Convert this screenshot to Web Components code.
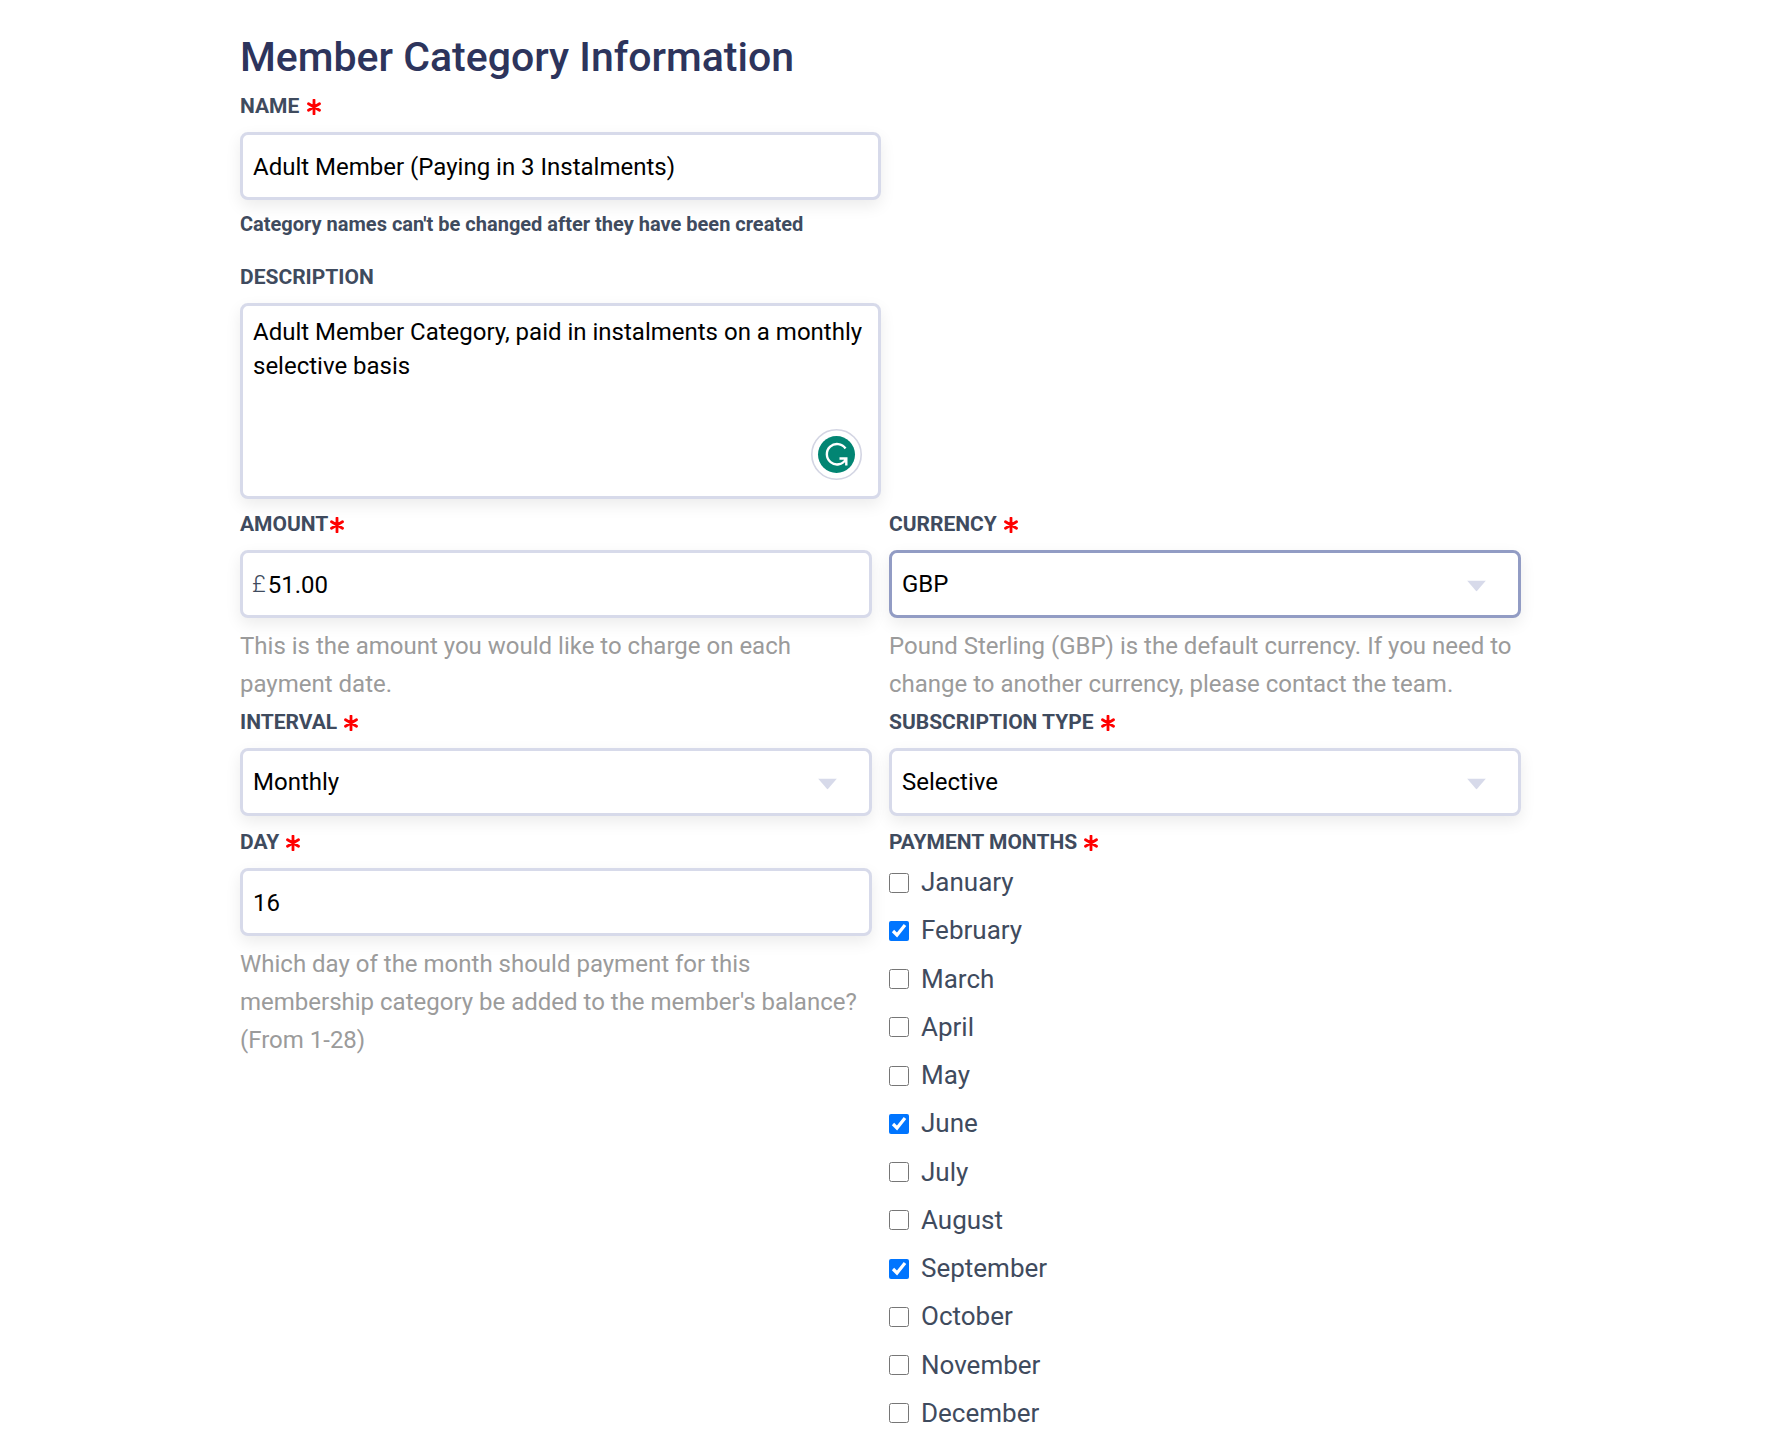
<!DOCTYPE html>
<html lang="en">
<head>
<meta charset="utf-8">
<meta name="viewport" content="width=device-width, initial-scale=1">
<title>Member Category Information</title>
<style>
  body {
    margin: 0;
    background: #fff;
    font-family: Roboto, "Liberation Sans", sans-serif;
    --ink: #3f4b5e;
    --heading: #2d345c;
    --line: #d7daea;
    --line-active: #929cc4;
    --muted: #9b9b9b;
    --required: #f00;
    --accent: #0075ff;
  }
</style>
</head>
<body>
<member-category-form></member-category-form>
<script>
const shared = `
  *, *::before, *::after { box-sizing: border-box; }
  :host { display: block; min-width: 0; color: var(--ink); }
  .label {
    display: block; margin: 0 0 7px; padding: 0;
    font-size: 21px; line-height: 38px; font-weight: 700; text-transform: uppercase;
  }
  .star { width: 14px; height: 16px; margin-left: 2px; vertical-align: -2px; }
  .box {
    position: relative; display: flex; align-items: stretch;
    border: 3px solid var(--line); border-radius: 8px; background: #fff;
    box-shadow: 0 6px 16px rgba(0, 0, 0, .08);
    margin-bottom: 7px;
  }
  :host([active]) .box { border-color: var(--line-active); }
  .box input, .box select, .box textarea {
    flex: 1; min-width: 0; width: 100%; margin: 0; padding: 0 10px; border: 0; outline: 0;
    background: none; border-radius: 5px; appearance: none;
    font-family: inherit; font-size: 24px; color: #000;
  }
  .box input, .box select { height: 62px; }
  .help { display: block; margin: 9px 0 0; font-size: 24px; line-height: 38px; color: var(--muted); }
`;
const star = `<svg class="star" viewBox="0 0 14 16" aria-hidden="true"><path d="M7 1v14M1.500 4.800l11 6.400M12.500 4.800l-11 6.400" stroke="var(--required)" stroke-width="2.800" stroke-linecap="round" fill="none"/></svg>`;

class BaseField extends HTMLElement {
  connectedCallback() {
    const root = this.attachShadow({ mode: 'open' });
    root.innerHTML = `<style>${shared}${this.styles()}</style>${this.markup()}`;
  }
  styles() { return ''; }
  get mark() {
    const r = this.getAttribute('required');
    return r === null ? '' : (r === 'tight' ? '' : ' ') + star;
  }
  get caption() { return `<label class="label" for="control">${this.getAttribute('label')}${this.mark}</label>`; }
  val(name) { return this.getAttribute(name) || ''; }
}

class TextField extends BaseField {
  styles() {
    return `.box input { padding-top: 1px; }
      .prefix { display: flex; align-items: center; padding-left: 9px; font-size: 24px; font-weight: 300; }
      .prefix + input { padding-left: 2px; }`;
  }
  markup() {
    const prefix = this.hasAttribute('prefix') ? `<span class="prefix">${this.val('prefix')}</span>` : '';
    return `${this.caption}<div class="box">${prefix}<input id="control" type="text" value="${this.val('value')}"></div><slot></slot>`;
  }
}
customElements.define('text-field', TextField);

class SelectField extends BaseField {
  styles() {
    return `.box select { padding-bottom: 1px; }
      .caret { position: absolute; right: 32px; top: 50%; margin-top: 2px; transform: translateY(-50%); width: 19px; height: 11px; pointer-events: none; }`;
  }
  markup() {
    return `${this.caption}<div class="box"><select id="control"><option>${this.val('value')}</option></select>
      <svg class="caret" viewBox="0 0 19 11" aria-hidden="true"><path d="M0 0h19L9.500 11z" fill="var(--line)"/></svg></div><slot></slot>`;
  }
}
customElements.define('select-field', SelectField);

class AreaField extends BaseField {
  styles() {
    return `.box { margin-bottom: 6px; }
      .box textarea { height: 190px; padding: 9px 10px; line-height: 34px; resize: none; }
      .assist { position: absolute; right: 16px; bottom: 16px; width: 51px; height: 51px; padding: 0; border: 0; background: none; }
      .assist svg { display: block; }`;
  }
  markup() {
    return `${this.caption}<div class="box"><textarea id="control">${this.val('value')}</textarea>
      <button class="assist" type="button" aria-label="Writing assistant"><svg width="51" height="51" viewBox="0 0 51 51">
        <circle cx="25.500" cy="25.500" r="24.700" fill="#fff" stroke="#d3d5e3" stroke-width="1.600"/>
        <circle cx="25.500" cy="25.500" r="18.500" fill="#028573"/>
        <path d="M34.500 19.500A10.200 10.200 0 1 0 34.800 30.500M28.500 29.500H35.300V36.500" fill="none" stroke="#fff" stroke-width="2.400"/>
      </svg></button></div><slot></slot>`;
  }
}
customElements.define('area-field', AreaField);

class HelpText extends HTMLElement {
  connectedCallback() {
    this.attachShadow({ mode: 'open' }).innerHTML = `<style>${shared}
      :host([strong]) .help { color: var(--ink); font-size: 20px; line-height: 34px; font-weight: 700; margin: 7px 0 17px; }
    </style><span class="help"><slot></slot></span>`;
  }
}
customElements.define('help-text', HelpText);

class MonthPicker extends BaseField {
  styles() {
    return `fieldset { margin: 0; padding: 0; border: 0; min-width: 0; }
      .label { margin: 0; }
      ul { list-style: none; margin: 0; padding: 0; min-height: 579px; display: grid; grid-auto-rows: 1fr; }
      li label { display: inline-flex; align-items: center; gap: 12px; font-size: 26px; line-height: 43px; }
      input { width: 20px; height: 20px; margin: 0; accent-color: var(--accent); }`;
  }
  markup() {
    const names = ['January', 'February', 'March', 'April', 'May', 'June', 'July', 'August', 'September', 'October', 'November', 'December'];
    const chosen = this.val('value').split(' ');
    return `<fieldset><legend class="label">${this.val('label')}${this.mark}</legend><ul>${names.map(n =>
      `<li><label><input type="checkbox"${chosen.includes(n) ? ' checked' : ''}><span>${n}</span></label></li>`).join('')}</ul></fieldset>`;
  }
}
customElements.define('month-picker', MonthPicker);

class MemberCategoryForm extends HTMLElement {
  connectedCallback() {
    this.attachShadow({ mode: 'open' }).innerHTML = `<style>
      :host { display: block; padding: 33px 253px 0 240px; }
      h1 { margin: 0 0 6px; font-size: 41px; line-height: 48px; font-weight: 500; color: var(--heading); }
      form { display: grid; grid-template-columns: 1fr 1fr; column-gap: 17px; align-items: start; }
      .wide { grid-column: 1 / -1; width: 50%; }
    </style>
    <h1>Member Category Information</h1>
    <form>
      <text-field class="wide" label="Name" required value="Adult Member (Paying in 3 Instalments)"><help-text strong>Category names can't be changed after they have been created</help-text></text-field>
      <area-field class="wide" label="Description" value="Adult Member Category, paid in instalments on a monthly selective basis"></area-field>
      <text-field label="Amount" required="tight" prefix="£" value="51.00"><help-text>This is the amount you would like to charge on each payment date.</help-text></text-field>
      <select-field label="Currency" required active value="GBP"><help-text>Pound Sterling (GBP) is the default currency. If you need to change to another currency, please contact the team.</help-text></select-field>
      <select-field label="Interval" required value="Monthly"></select-field>
      <select-field label="Subscription Type" required value="Selective"></select-field>
      <text-field label="Day" required value="16"><help-text>Which day of the month should payment for this membership category be added to the member's balance? (From 1-28)</help-text></text-field>
      <month-picker label="Payment Months" required value="February June September"></month-picker>
    </form>`;
  }
}
customElements.define('member-category-form', MemberCategoryForm);
</script>
</body>
</html>
